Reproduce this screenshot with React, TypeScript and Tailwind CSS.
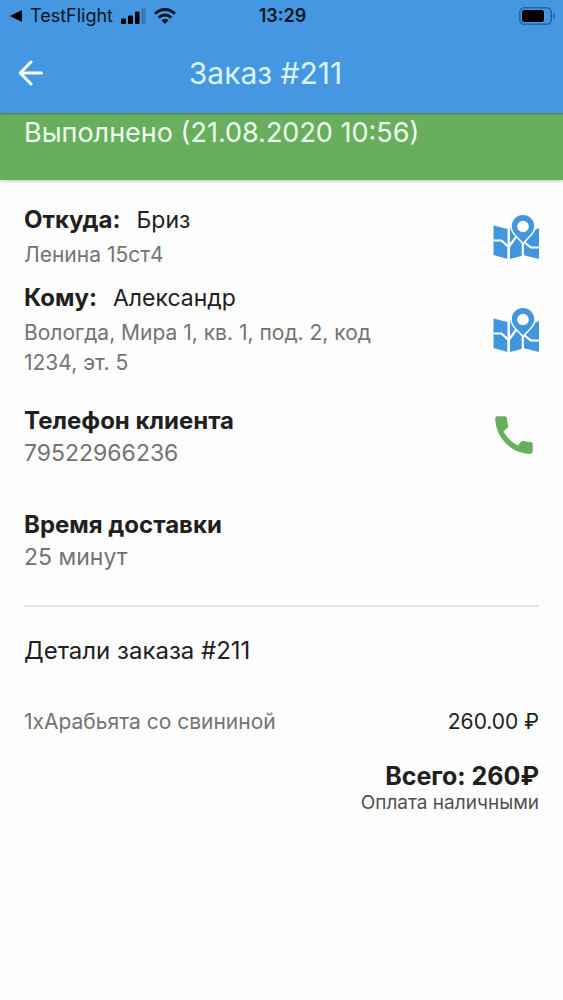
import React from "react";
import { MdCall } from "react-icons/md";

function SignalIcon() {
  return (
    <svg width="25" height="16" viewBox="0 0 25 16" aria-hidden="true">
      <rect x="0" y="10.5" width="5" height="5.5" rx="1.2" />
      <rect x="7" y="7.5" width="5" height="8.5" rx="1.2" />
      <rect x="14" y="3.5" width="4.5" height="12.5" rx="1.2" />
      <rect x="20.5" y="0" width="4" height="16" rx="1.2" opacity="0.2" />
    </svg>
  );
}

function WifiIcon() {
  return (
    <svg width="22" height="16" viewBox="0 0 22 16" fill="none" stroke="currentColor" strokeWidth="2.9" aria-hidden="true">
      <path d="M1 5.800C6.700.1 15.300.1 21 5.800" />
      <path d="M4.700 9.600c3.600-3.500 9-3.500 12.600 0" />
      <path d="M7.600 12.300c2-1.900 4.800-1.900 6.800 0L11 16z" fill="currentColor" stroke="none" />
    </svg>
  );
}

function BatteryIcon() {
  return (
    <svg width="36" height="18" viewBox="0 0 36 18" aria-hidden="true">
      <rect x="0.75" y="0.75" width="31.5" height="16.5" rx="4.5" fill="none" stroke="#2a6394" strokeWidth="1.5" />
      <rect x="3" y="3" width="22" height="12" rx="2.5" fill="#000" />
      <path d="M34 6c2.300.8 2.300 5.200 0 6z" fill="#2a6394" />
    </svg>
  );
}

function BackIcon() {
  return (
    <svg width="26" height="26" viewBox="0 0 26 26" fill="none" stroke="#fff" strokeWidth="3" strokeLinecap="round" strokeLinejoin="round" aria-hidden="true">
      <path d="M13 2 2.200 13 13 24M3 13h20.500" />
    </svg>
  );
}

function MapIcon() {
  return (
    <svg width="46" height="46" viewBox="-0.5 -1 46 46" aria-hidden="true">
      <g fill="#4296df">
        <path d="M0 10.500 14 14v30L0 40z" />
        <path d="M16.500 12.500 30 10.500V40.500L16.500 44z" />
        <path d="M29.500 20 45.500 13V44L29.500 40z" />
      </g>
      <g fill="none" stroke="#fff" strokeWidth="2.2">
        <path d="M0 25.500h8l7.200 6.500L22.500 22M15.200 32v13M29.300 26v16M29.300 26l8 6.500H46" />
      </g>
      <path
        d="M29.500 0a11.200 11.200 0 0 0-11.200 11.200c0 6.300 5.700 10 11.200 16.300 5.500-6.300 11.200-10 11.200-16.300A11.200 11.200 0 0 0 29.500 0z"
        fill="#4296df"
        stroke="#fff"
        strokeWidth="3"
        paintOrder="stroke"
      />
      <circle cx="29.5" cy="11.5" r="5.8" fill="#fff" />
    </svg>
  );
}

export default function App() {
  return (
    <div className="min-h-screen bg-[#fefefe] font-['Inter','Noto_Sans',sans-serif] text-[#202020]">
      <header className="relative bg-[#4497e0] shadow-[0_1px_2px_rgba(0,0,0,0.3)]">
        <div className="grid h-8 grid-cols-[1fr_auto_1fr] items-center pr-2 pl-2.5 text-[#061522]">
          <div className="flex items-center gap-2">
            <a href="#testflight" className="flex items-center gap-2 text-lg">
              <svg width="12" height="12" viewBox="0 0 12 12" aria-hidden="true">
                <path d="M0 6 12 0v12z" />
              </svg>
              TestFlight
            </a>
            <SignalIcon />
            <WifiIcon />
          </div>
          <time className="text-lg font-semibold">13:29</time>
          <div className="flex justify-end">
            <BatteryIcon />
          </div>
        </div>
        <div className="grid h-[81px] grid-cols-[48px_1fr_98px] items-center pl-[18px]">
          <button type="button" aria-label="Назад">
            <BackIcon />
          </button>
          <h1 className="text-center text-3xl leading-8 text-[#d9f3ff]">Заказ #211</h1>
        </div>
      </header>

      <section className="h-[67px] bg-[#68ae5c] px-6 pt-1 text-[27px] leading-8 text-[#edfff0] shadow-[0_1px_4px_rgba(0,0,0,0.25)]">
        Выполнено (21.08.2020 10:56)
      </section>

      <main className="px-6 pt-6">
        <section className="flex items-center justify-between">
          <div>
            <h2 className="flex items-baseline gap-4 text-2xl">
              <b className="font-bold">Откуда:</b>
              <span className="text-[23px]">Бриз</span>
            </h2>
            <p className="pt-1 text-[21px] leading-[30px] text-[#737373]">Ленина 15ст4</p>
          </div>
          <button type="button" aria-label="Показать отправителя на карте">
            <MapIcon />
          </button>
        </section>

        <section className="flex items-center justify-between pt-3">
          <div className="w-96">
            <h2 className="flex items-baseline gap-4 text-2xl">
              <b className="font-bold">Кому:</b>
              <span className="text-[23px]">Александр</span>
            </h2>
            <p className="pt-1 text-[21px] leading-[30px] text-[#737373]">
              Вологда, Мира 1, кв. 1, под. 2, код 1234, эт. 5
            </p>
          </div>
          <button type="button" aria-label="Показать получателя на карте">
            <MapIcon />
          </button>
        </section>

        <section className="flex items-start justify-between pt-6">
          <div className="pt-[3px]">
            <h2 className="text-2xl font-bold">Телефон клиента</h2>
            <p className="text-[23px] leading-8 text-[#737373]">79522966236</p>
          </div>
          <a href="tel:79522966236" aria-label="Позвонить клиенту" className="pt-2">
            <MdCall size={50} color="#68ae5c" />
          </a>
        </section>

        <section className="pt-10">
          <h2 className="text-2xl font-bold">Время доставки</h2>
          <p className="text-[23px] leading-8 text-[#737373]">25 минут</p>
        </section>

        <hr className="mt-8 border-t-2 border-[#e4e4e4]" />

        <section className="pt-7">
          <h2 className="text-2xl">Детали заказа #211</h2>
          <div className="flex items-center justify-between pt-10 text-[21px] leading-[30px]">
            <span className="text-[#737373]">1xАрабьята со свининой</span>
            <span>260.00 ₽</span>
          </div>
          <div className="pt-6 text-right">
            <p className="text-[25px] leading-[30px] font-bold">Всего: 260₽</p>
            <p className="text-[19px] leading-6 text-[#505050]">Оплата наличными</p>
          </div>
        </section>
      </main>
    </div>
  );
}
